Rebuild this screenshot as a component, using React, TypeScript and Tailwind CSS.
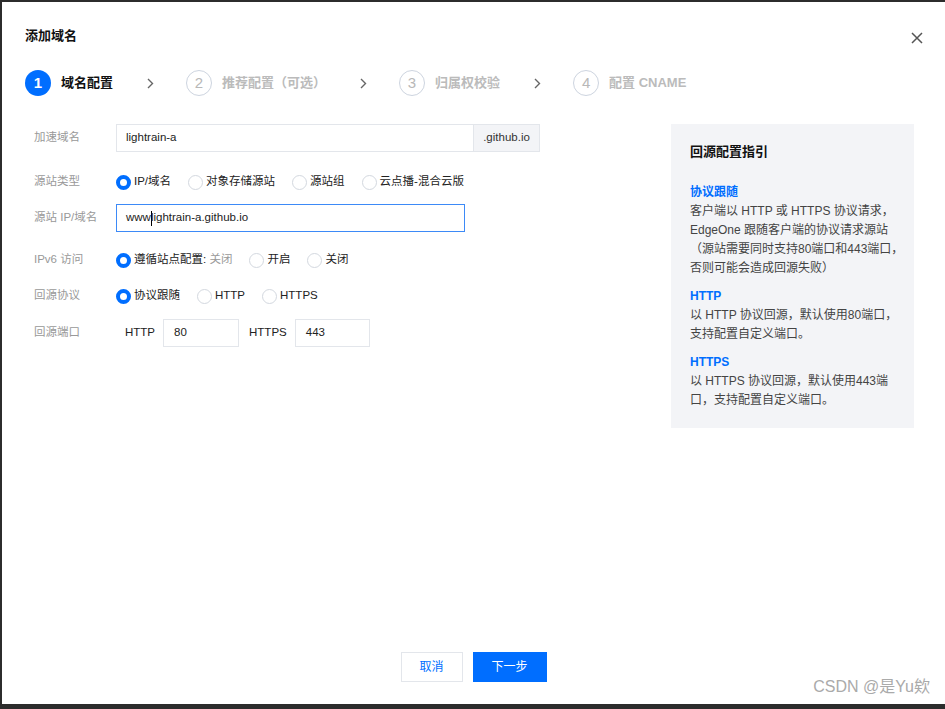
import React from 'react'

const BLUE = 'text-[#006eff]'

function Radio({ checked }: { checked?: boolean }): React.JSX.Element {
  return checked ? (
    <span className="box-border w-[15px] h-[15px] rounded-full border-[4px] border-[#006eff] bg-white shrink-0" />
  ) : (
    <span className="box-border w-[15px] h-[15px] rounded-full border border-[#d3d8df] bg-white shrink-0" />
  )
}

function RadioGroup({ items }: { items: { label: React.ReactNode; checked?: boolean }[] }): React.JSX.Element {
  return (
    <div className="flex items-center gap-[17px]">
      {items.map((it, i) => (
        <label key={i} className="flex items-center gap-[3px] text-[11.5px] text-[#222]">
          <Radio checked={it.checked} />
          <span>{it.label}</span>
        </label>
      ))}
    </div>
  )
}

function Chevron(): React.JSX.Element {
  return (
    <svg width="7" height="11" viewBox="0 0 7 11" className="shrink-0">
      <path d="M1 1l4.5 4.5L1 10" fill="none" stroke="#666" strokeWidth="1.4" />
    </svg>
  )
}

function Step({ n, label, active }: { n: number; label: string; active?: boolean }): React.JSX.Element {
  return (
    <div className="flex items-center gap-[10px]">
      {active ? (
        <span className="w-[26px] h-[26px] rounded-full bg-[#006eff] text-white text-[15px] font-bold flex items-center justify-center">
          {n}
        </span>
      ) : (
        <span className="box-border w-[26px] h-[26px] rounded-full border-[1.5px] border-[#cdd4df] text-[#b8b8b8] text-[15px] flex items-center justify-center">
          {n}
        </span>
      )}
      <span className={active ? 'text-[13px] font-bold text-[#111]' : 'text-[13px] font-bold text-[#bbb]'}>{label}</span>
    </div>
  )
}

function Row({ label, children, className }: { label: string; children: React.ReactNode; className?: string }): React.JSX.Element {
  return (
    <div className={`flex items-center ${className ?? ''}`}>
      <span className="w-[82px] shrink-0 text-[11.5px] text-[#999]">{label}</span>
      {children}
    </div>
  )
}

export default function App(): React.JSX.Element {
  return (
    <div className="relative box-border w-[945px] h-[709px] border-t-2 border-l-2 border-b-[5px] border-[#2c2c2c] bg-white flex flex-col font-['Liberation_Sans','Noto_Sans_CJK_SC',sans-serif]">
      {/* header */}
      <div className="flex items-center justify-between pl-[23px] pr-[22px] pt-[24px] h-[44px]">
        <h1 className="text-[13px] font-bold text-[#111] leading-[20px]">添加域名</h1>
        <svg width="12" height="12" viewBox="0 0 12 12" className="mt-[4px]">
          <path d="M1 1l10 10M11 1L1 11" stroke="#555" strokeWidth="1.5" />
        </svg>
      </div>

      {/* steps */}
      <div className="flex items-center pl-[23px] mt-[24px]">
        <Step n={1} label="域名配置" active />
        <span className="ml-[34px] mr-[32px] flex"><Chevron /></span>
        <Step n={2} label="推荐配置（可选）" />
        <span className="ml-[34px] mr-[32px] flex"><Chevron /></span>
        <Step n={3} label="归属权校验" />
        <span className="ml-[34px] mr-[32px] flex"><Chevron /></span>
        <Step n={4} label="配置 CNAME" />
      </div>

      {/* body */}
      <div className="flex justify-between pl-[32px] pr-[31px] mt-[28px]">
        <div className="flex flex-col">
          <Row label="加速域名">
            <div className="flex h-[28px]">
              <div className="box-border w-[358px] h-[28px] border border-[#e3e6eb] flex items-center pl-[9px] text-[11.5px] text-[#222]">
                lightrain-a
              </div>
              <div className="box-border w-[66px] h-[28px] border border-l-0 border-[#e3e6eb] bg-[#f3f4f7] flex items-center justify-center text-[11.5px] text-[#333]">
                .github.io
              </div>
            </div>
          </Row>

          <Row label="源站类型" className="mt-[20px] h-[20px]">
            <RadioGroup
              items={[
                { label: 'IP/域名', checked: true },
                { label: '对象存储源站' },
                { label: '源站组' },
                { label: '云点播-混合云版' },
              ]}
            />
          </Row>

          <Row label="源站 IP/域名" className="mt-[12px]">
            <div className="box-border w-[349px] h-[28px] border border-[#3d8af7] flex items-center pl-[9px] text-[11.5px] text-[#222]">
              www<span className="inline-block w-[1px] h-[15px] bg-black mr-[-1px]" />lightrain-a.github.io
            </div>
          </Row>

          <Row label="IPv6 访问" className="mt-[18px] h-[20px]">
            <RadioGroup
              items={[
                {
                  label: (
                    <>
                      遵循站点配置: <span className="text-[#999]">关闭</span>
                    </>
                  ),
                  checked: true,
                },
                { label: '开启' },
                { label: '关闭' },
              ]}
            />
          </Row>

          <Row label="回源协议" className="mt-[16px] h-[20px]">
            <RadioGroup items={[{ label: '协议跟随', checked: true }, { label: 'HTTP' }, { label: 'HTTPS' }]} />
          </Row>

          <Row label="回源端口" className="mt-[13px]">
            <div className="flex items-center pl-[9px] text-[11.5px] text-[#222]">
              <span>HTTP</span>
              <div className="box-border ml-[8px] w-[76px] h-[28px] border border-[#e3e6eb] flex items-center pl-[10px]">80</div>
              <span className="ml-[10px]">HTTPS</span>
              <div className="box-border ml-[8px] w-[75px] h-[28px] border border-[#e3e6eb] flex items-center pl-[10px]">443</div>
            </div>
          </Row>
        </div>

        {/* guide panel */}
        <div className="w-[243px] bg-[#f3f4f7] pl-[19px] pr-[10px] pt-[18px] pb-[18px] text-[12px] leading-[19px] text-[#444]">
          <h2 className="text-[13px] font-bold text-[#111] leading-[20px]">回源配置指引</h2>
          <div className={`mt-[21px] font-bold ${BLUE}`}>协议跟随</div>
          <div>客户端以 HTTP 或 HTTPS 协议请求，</div>
          <div>EdgeOne 跟随客户端的协议请求源站</div>
          <div>（源站需要同时支持80端口和443端口，</div>
          <div>否则可能会造成回源失败）</div>
          <div className={`mt-[9px] font-bold ${BLUE}`}>HTTP</div>
          <div>以 HTTP 协议回源，默认使用80端口，</div>
          <div>支持配置自定义端口。</div>
          <div className={`mt-[9px] font-bold ${BLUE}`}>HTTPS</div>
          <div>以 HTTPS 协议回源，默认使用443端</div>
          <div>口，支持配置自定义端口。</div>
        </div>
      </div>

      {/* footer */}
      <div className="mt-auto pb-[22px] flex justify-center gap-[10px]">
        <button className="box-border w-[62px] h-[30px] border border-[#e3e6eb] bg-white text-[12px] text-[#006eff]">取消</button>
        <button className="box-border w-[74px] h-[30px] bg-[#006eff] text-[12px] text-white">下一步</button>
      </div>

      <span className="absolute right-[15px] bottom-[5px] text-[16px] text-[#aaa]">CSDN @是Yu欸</span>
    </div>
  )
}
